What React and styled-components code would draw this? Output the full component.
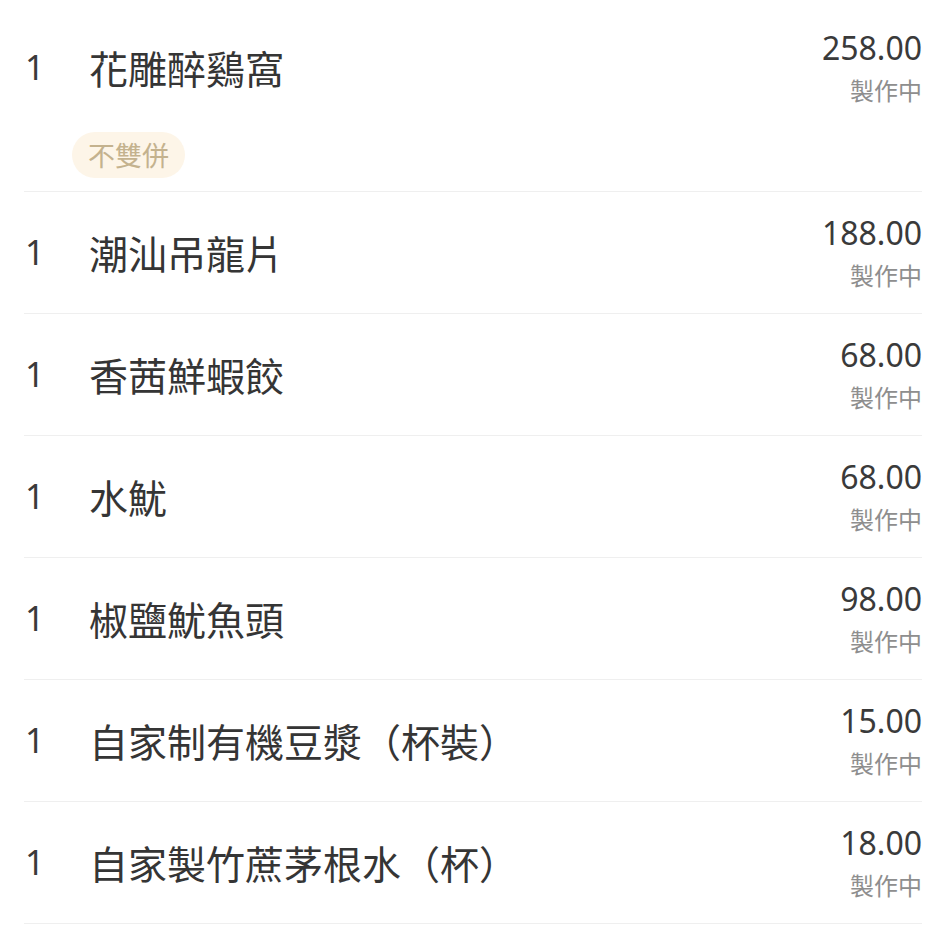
import React from "react";
import styled, { createGlobalStyle } from "styled-components";

const items = [
  { qty: 1, name: "花雕醉鷄窩", price: "258.00", status: "製作中", tags: ["不雙併"] },
  { qty: 1, name: "潮汕吊龍片", price: "188.00", status: "製作中" },
  { qty: 1, name: "香茜鮮蝦餃", price: "68.00", status: "製作中" },
  { qty: 1, name: "水魷", price: "68.00", status: "製作中" },
  { qty: 1, name: "椒鹽魷魚頭", price: "98.00", status: "製作中" },
  { qty: 1, name: "自家制有機豆漿（杯裝）", price: "15.00", status: "製作中" },
  { qty: 1, name: "自家製竹蔗茅根水（杯）", price: "18.00", status: "製作中" },
];

const GlobalStyle = createGlobalStyle`
  body {
    margin: 0;
    background: #ffffff;
    font-family: "Noto Sans", "Noto Sans CJK TC", sans-serif;
  }
`;

const App = () => {
  return (
    <>
      <GlobalStyle />
      <StOrderList>
        {items.map((item, i) => (
          <StOrderRow key={i} $hasTag={!!item.tags}>
            <StMainLine>
              <StQty>{item.qty}</StQty>
              <StName>{item.name}</StName>
              <StRightBlock>
                <StPrice>{item.price}</StPrice>
                <StStatus>{item.status}</StStatus>
              </StRightBlock>
            </StMainLine>
            {item.tags && (
              <StTagList>
                {item.tags.map((t) => (
                  <StTag key={t}>{t}</StTag>
                ))}
              </StTagList>
            )}
          </StOrderRow>
        ))}
      </StOrderList>
    </>
  );
};

export default App;

const StOrderList = styled.div`
  padding: 7px 24px 0;
`;

const StOrderRow = styled.div`
  display: flex;
  flex-direction: column;
  padding: 21px 0 ${(p) => (p.$hasTag ? "13px" : "22px")};
  border-bottom: 1px solid #efefef;
`;

const StMainLine = styled.div`
  display: flex;
  align-items: center;
`;

const StQty = styled.div`
  width: 64px;
  flex-shrink: 0;
  font-size: 34px;
  color: #3a3a3a;
  padding-left: 1px;
`;

const StName = styled.div`
  flex: 1;
  font-size: 39px;
  color: #353535;
  font-family: "Noto Sans CJK TC", "Noto Sans", sans-serif;
`;

const StRightBlock = styled.div`
  display: flex;
  flex-direction: column;
  align-items: flex-end;
`;

const StPrice = styled.div`
  font-size: 32px;
  line-height: 40px;
  color: #3a3a3a;
`;

const StStatus = styled.div`
  margin-top: 6px;
  font-size: 24px;
  line-height: 32px;
  color: #8e8e8e;
  font-family: "Noto Sans CJK TC", sans-serif;
`;

const StTagList = styled.div`
  display: flex;
  gap: 12px;
  margin-top: 26px;
  padding-left: 48px;
`;

const StTag = styled.div`
  height: 46px;
  padding: 0 16px;
  border-radius: 23px;
  background: #fdf5e8;
  color: #c4b28e;
  font-size: 27px;
  line-height: 46px;
  font-family: "Noto Sans CJK TC", sans-serif;
`;
